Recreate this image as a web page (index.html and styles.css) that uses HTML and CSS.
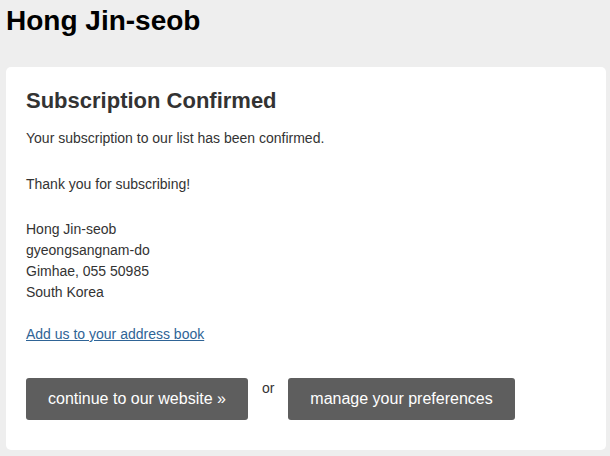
FILE: index.html
```html
<!DOCTYPE html>
<html>
<head>
<meta charset="utf-8">
<link rel="stylesheet" href="styles.css">
</head>
<body>
<h1 class="site-title">Hong Jin-seob</h1>
<div class="card">
  <h2 class="card-title">Subscription Confirmed</h2>
  <p class="msg">Your subscription to our list has been confirmed.</p>
  <p class="msg thanks">Thank you for subscribing!</p>
  <p class="address">Hong Jin-seob<br>gyeongsangnam-do<br>Gimhae, 055 50985<br>South Korea</p>
  <p class="addr-link"><a href="#">Add us to your address book</a></p>
  <div class="actions">
    <a class="btn" href="#">continue to our website »</a>
    <span class="or">or</span>
    <a class="btn" href="#">manage your preferences</a>
  </div>
</div>
</body>
</html>
```
FILE: styles.css
```css
html, body {
  margin: 0;
  padding: 0;
  background: #eeeeee;
}
body {
  padding: 0 4px 0 6px;
  font-family: "Liberation Sans", Arial, sans-serif;
  color: #333333;
  font-size: 14px;
  line-height: 21px;
}
.site-title {
  margin: 5px 0 30px 0;
  font-size: 28px;
  line-height: 32px;
  font-weight: bold;
  color: #000000;
}
.card {
  background: #ffffff;
  border-radius: 5px;
  padding: 21px 20px 30px 20px;
}
.card-title {
  margin: 0;
  font-size: 22px;
  line-height: 25px;
  font-weight: bold;
  color: #333333;
}
.msg {
  margin: 15px 0 0 0;
}
.thanks {
  margin-top: 25px;
}
.address {
  margin: 24px 0 0 0;
}
.addr-link {
  margin: 21px 0 0 0;
}
.addr-link a {
  color: #2f6496;
  text-decoration: underline;
}
.actions {
  display: flex;
  align-items: flex-start;
  margin-top: 33px;
}
.btn {
  display: block;
  background: #5e5e5e;
  color: #ffffff;
  text-decoration: none;
  font-size: 16px;
  line-height: 18px;
  padding: 12px 22px;
  border-radius: 3px;
}
.or {
  margin: 0 14px;
  line-height: 21px;
  color: #333333;
}
```
